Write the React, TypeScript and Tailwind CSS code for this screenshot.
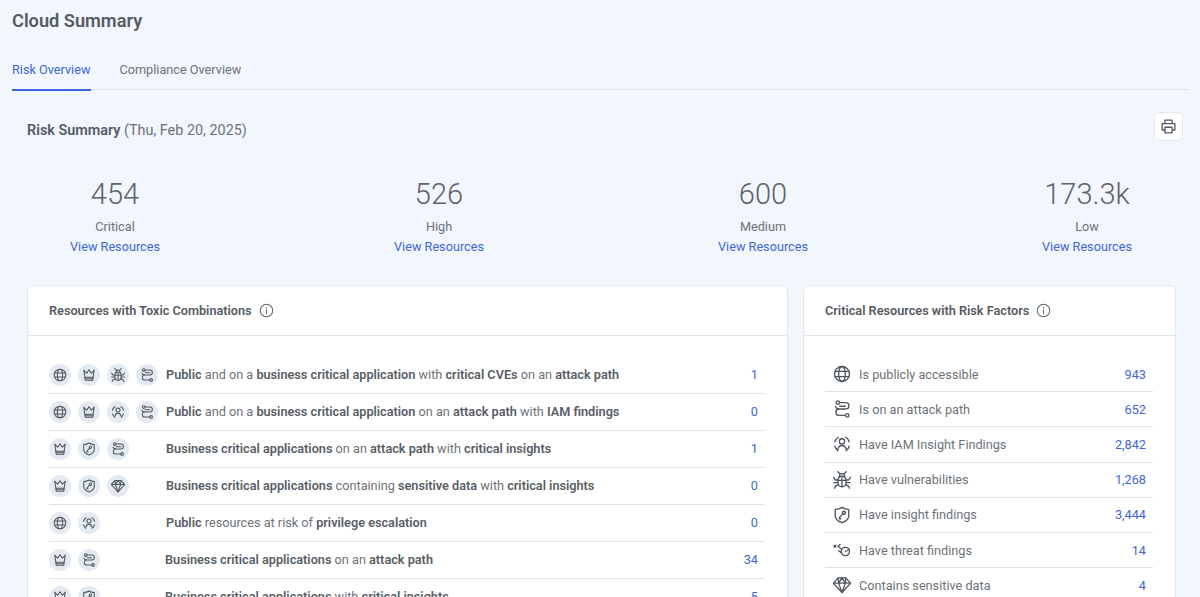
import React from "react";

const S = (p: { size: number; children: React.ReactNode }) => (
  <svg width={p.size} height={p.size} viewBox="0 0 24 24" fill="none" stroke="#50565e" strokeWidth={1.8} strokeLinecap="round" strokeLinejoin="round">
    {p.children}
  </svg>
);

type I = { size: number };
const Globe = ({ size }: I) => (
  <S size={size}>
    <circle cx="12" cy="12" r="10" />
    <ellipse cx="12" cy="12" rx="4.500" ry="10" />
    <path d="M2.800 8.500h18.400M2.800 15.500h18.400" />
  </S>
);
const Crown = ({ size }: I) => (
  <S size={size}>
    <path d="M3 3.500l2 12.500h14l2-12.500-5 5.500-4-6-4 6z" />
    <path d="M5 16l.500 5h13l.500-5" />
    <path d="M5.500 18.500h13" />
  </S>
);
const Bug = ({ size }: I) => (
  <S size={size}>
    <path d="M6.500 12.500a5.500 5.500 0 0 1 11 0v3a5.500 5.500 0 0 1-11 0z" />
    <path d="M8.500 8.500V7a3.500 3.500 0 0 1 7 0v1.500M12 9v12M6.500 12H3L1 8.500M17.500 12H21l2-3.500M6.500 15.500H1M17.500 15.500H23M7.500 18.500L3.500 20 2 23M16.500 18.500l4 1.500 1.500 3M9 3.500L6.500 1M15 3.500L17.500 1M6.500 12.500h11" />
  </S>
);
const Route = ({ size }: I) => (
  <S size={size}>
    <circle cx="6.500" cy="3.500" r="2.300" />
    <circle cx="19" cy="20.500" r="2.300" />
    <path d="M9 3.500h8a4 4 0 0 1 0 8.500H7.500a4.300 4.300 0 0 0 0 8.500h9" />
    <path d="M7.500 12a4.300 4.300 0 0 1-4-3M9 8.300h7.500" />
  </S>
);
const Iam = ({ size }: I) => (
  <S size={size}>
    <circle cx="12" cy="8.500" r="3.500" />
    <path d="M6.500 19c1-3.500 3-5 5.500-5s4.500 1.500 5.500 5" />
    <path d="M2.500 9a10 10 0 0 1 4.500-6M21.500 9a10 10 0 0 0-4.500-6M2.500 15c.6 2.500 2 4.500 4 6M21.500 15c-.6 2.500-2 4.500-4 6" />
  </S>
);
const Shield = ({ size }: I) => (
  <S size={size}>
    <path d="M12 1.800c2.500 1.800 5.500 2.700 9 2.700v8.500c0 4.500-4 7.500-9 9.200-5-1.700-9-4.700-9-9.200V4.500c3.500 0 6.500-.900 9-2.700z" />
    <circle cx="14.500" cy="9" r="2" />
    <path d="M13 10.500L8.500 15.500v1.500h2" />
  </S>
);
const Threat = ({ size }: I) => (
  <S size={size}>
    <circle cx="16.500" cy="14" r="5.500" />
    <path d="M11.500 11L6.500 7M11 15.500l-3.500-2.500M1.500 6l2 2M4 5.500L1.500 8M8 6l1.500-1.500" />
    <path d="M16.500 14l5-3" />
  </S>
);
const Diamond = ({ size }: I) => (
  <S size={size}>
    <path d="M7 2.500h10L23.500 9.500 12 22 .500 9.500z" />
    <path d="M.500 9.500h23M7 2.500L7.500 9.500 12 22l4.500-12.500L17 2.500M7.500 9.500L12 2.500l4.500 7" />
  </S>
);
const Info = () => (
  <svg width="15" height="15" viewBox="0 0 24 24" fill="none" stroke="#5f6670" strokeWidth={1.7} strokeLinecap="round">
    <circle cx="12" cy="12" r="10" />
    <path d="M12 11v6" />
    <path d="M12 7.300v.2" strokeWidth={2.200} />
  </svg>
);
const Printer = () => (
  <svg width="17" height="17" viewBox="0 0 24 24" fill="none" stroke="#555b63" strokeWidth={1.9} strokeLinejoin="round">
    <path d="M7 8V3h10v5" />
    <path d="M7 17H3V8h18v9h-4" />
    <path d="M7 13h10v8H7z" />
  </svg>
);

const Badge = ({ icon: Icon }: { icon: React.ComponentType<I> }) => (
  <span className="flex h-[22px] w-[22px] shrink-0 items-center justify-center rounded-full bg-[#e4eaf2]">
    <Icon size={14} />
  </span>
);

const stats = [
  ["454", "Critical"],
  ["526", "High"],
  ["600", "Medium"],
  ["173.3k", "Low"],
];

const B = ({ children }: { children: React.ReactNode }) => <b className="font-semibold text-[#585e66]">{children}</b>;

const toxic: { icons: React.ComponentType<I>[]; text: React.ReactNode; n: string; w?: string }[] = [
  { icons: [Globe, Crown, Bug, Route], text: <><B>Public</B> and on a <B>business critical application</B> with <B>critical CVEs</B> on an <B>attack path</B></>, n: "1" },
  { icons: [Globe, Crown, Iam, Route], text: <><B>Public</B> and on a <B>business critical application</B> on an <B>attack path</B> with <B>IAM findings</B></>, n: "0" },
  { icons: [Crown, Shield, Route], text: <><B>Business critical applications</B> on an <B>attack path</B> with <B>critical insights</B></>, n: "1" },
  { icons: [Crown, Shield, Diamond], text: <><B>Business critical applications</B> containing <B>sensitive data</B> with <B>critical insights</B></>, n: "0" },
  { icons: [Globe, Iam], text: <><B>Public</B> resources at risk of <B>privilege escalation</B></>, n: "0" },
  { icons: [Crown, Route], text: <><B>Business critical applications</B> on an <B>attack path</B></>, n: "34", w: "w-[116px]" },
  { icons: [Crown, Shield], text: <><B>Business critical applications</B> with <B>critical insights</B></>, n: "5", w: "w-[116px]" },
];

const factors: [React.ComponentType<I>, string, string][] = [
  [Globe, "Is publicly accessible", "943"],
  [Route, "Is on an attack path", "652"],
  [Iam, "Have IAM Insight Findings", "2,842"],
  [Bug, "Have vulnerabilities", "1,268"],
  [Shield, "Have insight findings", "3,444"],
  [Threat, "Have threat findings", "14"],
  [Diamond, "Contains sensitive data", "4"],
];

const CardHead = ({ title }: { title: string }) => (
  <div className="flex h-[50px] items-center gap-[7px] border-b border-[#dfe5ec] px-[21px] text-[12.700px] font-semibold text-[#555b63]">
    {title}
    <Info />
  </div>
);

export default function App() {
  return (
    <div className="h-[597px] overflow-hidden bg-[#f2f6fd] font-['Roboto',sans-serif] text-[#6d7279]">
      <h1 className="ml-3 pt-[9px] text-[18.200px] font-semibold leading-[24px] text-[#555b63]">Cloud Summary</h1>
      <div className="mx-3 mt-[16px] flex h-[41px] items-center gap-[28px] border-b border-[#dbe2ee] text-[12.700px]">
        <span className="relative flex h-[41px] items-center pr-[1px] pt-[2px] text-[#3f66d6]">
          Risk Overview
          <span className="absolute -bottom-px left-0 right-0 h-[1.500px] bg-[#3f66d6]" />
        </span>
        <span className="pt-[2px]">Compliance Overview</span>
      </div>
      <div className="mx-[15px] mt-[14px] border-t border-[#edf1f9] pl-3 pr-[10px]">
        <div className="flex items-start justify-between pt-[7px]">
          <div className="pt-[7px] text-[14.400px] leading-[24px]">
            <span className="font-semibold text-[#555b63]">Risk Summary</span> (Thu, Feb 20, 2025)
          </div>
          <button className="-mr-[8px] flex h-[29px] w-[29px] items-center justify-center rounded-[5px] border border-[#e4e8ee] bg-white">
            <Printer />
          </button>
        </div>
        <div className="mt-[31px] flex justify-between">
          {stats.map(([v, l]) => (
            <div key={l} className="flex w-[176px] flex-col items-center">
              <div className="text-[29px] font-light leading-[40px] text-[#5c6269]">{v}</div>
              <div className="mt-[3px] text-[12.700px] leading-[20px]">{l}</div>
              <div className="text-[12.700px] leading-[20px] text-[#3f66d6]">View Resources</div>
            </div>
          ))}
        </div>
        <div className="mt-[28px] flex items-start gap-[15px]">
          <div className="h-[400px] w-[761px] shrink-0 rounded-t-[6px] border border-[#e2e7ee] bg-white">
            <CardHead title="Resources with Toxic Combinations" />
            <div className="pl-[21px] pr-[22px] pt-[21px]">
              {toxic.map((r, i) => (
                <div key={i} className="flex h-[37px] items-center border-b border-[#dce3ec] text-[12.700px]">
                  <div className={`flex shrink-0 gap-[7px] ${r.w ?? "w-[117px]"}`}>
                    {r.icons.map((Ic, k) => <Badge key={k} icon={Ic} />)}
                  </div>
                  <div className="flex-1">{r.text}</div>
                  <div className="pr-[7px] text-[#3f66d6]">{r.n}</div>
                </div>
              ))}
            </div>
          </div>
          <div className="h-[400px] w-[373px] shrink-0 rounded-t-[6px] border border-[#e2e7ee] bg-white">
            <CardHead title="Critical Resources with Risk Factors" />
            <div className="pl-[21px] pr-[22px] pt-[21px]">
              {factors.map(([Ic, t, n]) => (
                <div key={t} className="flex h-[35.200px] items-center border-b border-[#dce3ec] text-[12.700px]">
                  <span className="flex w-[34px] shrink-0 justify-center"><Ic size={18} /></span>
                  <span className="flex-1">{t}</span>
                  <span className="pr-[7px] text-[#3f66d6]">{n}</span>
                </div>
              ))}
            </div>
          </div>
        </div>
      </div>
    </div>
  );
}
